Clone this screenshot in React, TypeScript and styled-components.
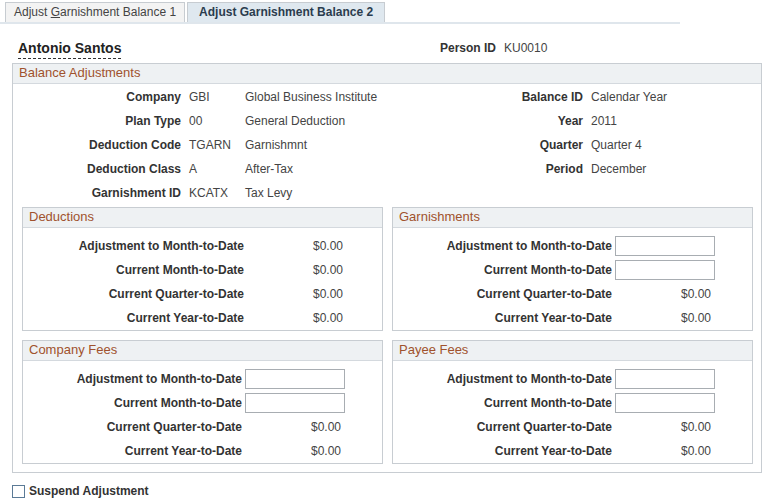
import React from 'react'
import styled, { createGlobalStyle } from 'styled-components'

const Global = createGlobalStyle`
  body { margin: 0; font-family: "Liberation Sans", Arial, sans-serif; font-size: 12px; color: #333; background: #fff; }
`

const Page = styled.div`
  width: 768px;
  height: 503px;
  position: relative;
  overflow: hidden;
`

const Tabs = styled.div`
  display: flex;
  gap: 2px;
  padding: 2px 0 0 5px;
  width: 675px;
  border-bottom: 2px solid #dfe6ec;
`

const Tab = styled.div<{ $active?: boolean }>`
  height: 19px;
  line-height: 19px;
  padding: 0 ${p => (p.$active ? '11px' : '8px')};
  border: 1px solid #c7ccd1;
  border-bottom: none;
  background: ${p => (p.$active ? '#dfe8ef' : '#f3f3f3')};
  font-weight: ${p => (p.$active ? 'bold' : 'normal')};
  color: ${p => (p.$active ? '#2b3c4e' : '#444')};
  font-size: 12px;
`

const HeaderRow = styled.div`
  display: flex;
  align-items: center;
  height: 22px;
  margin-top: 13px;
  padding-left: 18px;
`

const Name = styled.div`
  width: 422px;
  font-size: 14px;
  font-weight: bold;
  color: #222;
  span { border-bottom: 1px dashed #333; padding-bottom: 2px; }
`

const Label = styled.div<{ $w?: number }>`
  font-weight: bold;
  color: #333;
  text-align: right;
  width: ${p => (p.$w ? p.$w + 'px' : 'auto')};
  white-space: nowrap;
`

const Value = styled.div<{ $w?: number; $ml?: number }>`
  color: #444;
  width: ${p => (p.$w ? p.$w + 'px' : 'auto')};
  margin-left: ${p => p.$ml ?? 0}px;
  white-space: nowrap;
`

const Box = styled.div<{ $w: number; $h: number }>`
  width: ${p => p.$w}px;
  height: ${p => p.$h}px;
  border: 1px solid #c8cdd2;
  box-sizing: border-box;
`

const BoxHead = styled.div`
  height: 19px;
  line-height: 18px;
  padding-left: 6px;
  background: #eef1f3;
  border-bottom: 1px solid #d4d9de;
  color: #a0522d;
  font-size: 13px;
`

const Outer = styled(Box)`
  margin: 4px 0 0 12px;
`

const TopGrid = styled.div`
  display: flex;
  padding-top: 1px;
`

const Col = styled.div<{ $w: number }>`
  width: ${p => p.$w}px;
  display: flex;
  flex-direction: column;
`

const Row = styled.div`
  display: flex;
  align-items: center;
  height: 24px;
`

const SubGrid = styled.div`
  display: grid;
  grid-template-columns: 361px 361px;
  column-gap: 9px;
  row-gap: 9px;
  padding: 2px 0 0 9px;
`

const SubBody = styled.div`
  padding-top: 6px;
`

const Input = styled.div`
  width: 98px;
  height: 18px;
  border: 1px solid #a8adb2;
  margin-left: 3px;
  background: #fff;
`

const Suspend = styled.div`
  display: flex;
  align-items: center;
  gap: 4px;
  margin: 11px 0 0 12px;
  font-weight: bold;
`

const Check = styled.div`
  width: 11px;
  height: 11px;
  border: 1px solid #5b7a96;
  background: #fff;
`

type Line = { label: string; kind: 'val' | 'input' }

function SubPanel({ title, lines, lw, vgap }: { title: string; lines: Line[]; lw: number; vgap: number }) {
  return (
    <Box $w={361} $h={124}>
      <BoxHead>{title}</BoxHead>
      <SubBody>
        {lines.map(l => (
          <Row key={l.label}>
            <Label $w={lw}>{l.label}</Label>
            {l.kind === 'input' ? <Input /> : <Value $ml={vgap}>$0.00</Value>}
          </Row>
        ))}
      </SubBody>
    </Box>
  )
}

const allVals: Line[] = [
  { label: 'Adjustment to Month-to-Date', kind: 'val' },
  { label: 'Current Month-to-Date', kind: 'val' },
  { label: 'Current Quarter-to-Date', kind: 'val' },
  { label: 'Current Year-to-Date', kind: 'val' },
]
const withInputs: Line[] = [
  { label: 'Adjustment to Month-to-Date', kind: 'input' },
  { label: 'Current Month-to-Date', kind: 'input' },
  { label: 'Current Quarter-to-Date', kind: 'val' },
  { label: 'Current Year-to-Date', kind: 'val' },
]

const leftTop = [
  ['Company', 'GBI', 'Global Business Institute'],
  ['Plan Type', '00', 'General Deduction'],
  ['Deduction Code', 'TGARN', 'Garnishmnt'],
  ['Deduction Class', 'A', 'After-Tax'],
  ['Garnishment ID', 'KCATX', 'Tax Levy'],
]
const rightTop = [
  ['Balance ID', 'Calendar Year'],
  ['Year', '2011'],
  ['Quarter', 'Quarter 4'],
  ['Period', 'December'],
]

export default function App() {
  return (
    <Page>
      <Global />
      <Tabs>
        <Tab>Adjust <u>G</u>arnishment Balance 1</Tab>
        <Tab $active>Adjust Garnishment Balance 2</Tab>
      </Tabs>
      <HeaderRow>
        <Name><span>Antonio Santos</span></Name>
        <Label>Person ID</Label>
        <Value $ml={8}>KU0010</Value>
      </HeaderRow>
      <Outer $w={750} $h={410}>
        <BoxHead>Balance Adjustments</BoxHead>
        <TopGrid>
          <Col $w={400}>
            {leftTop.map(([l, c, d]) => (
              <Row key={l}>
                <Label $w={168}>{l}</Label>
                <Value $w={56} $ml={8}>{c}</Value>
                <Value>{d}</Value>
              </Row>
            ))}
          </Col>
          <Col $w={348}>
            {rightTop.map(([l, v]) => (
              <Row key={l}>
                <Label $w={170}>{l}</Label>
                <Value $ml={8}>{v}</Value>
              </Row>
            ))}
          </Col>
        </TopGrid>
        <SubGrid>
          <SubPanel title="Deductions" lines={allVals} lw={221} vgap={69} />
          <SubPanel title="Garnishments" lines={withInputs} lw={219} vgap={69} />
          <SubPanel title="Company Fees" lines={withInputs} lw={219} vgap={69} />
          <SubPanel title="Payee Fees" lines={withInputs} lw={219} vgap={69} />
        </SubGrid>
      </Outer>
      <Suspend>
        <Check />
        Suspend Adjustment
      </Suspend>
    </Page>
  )
}
